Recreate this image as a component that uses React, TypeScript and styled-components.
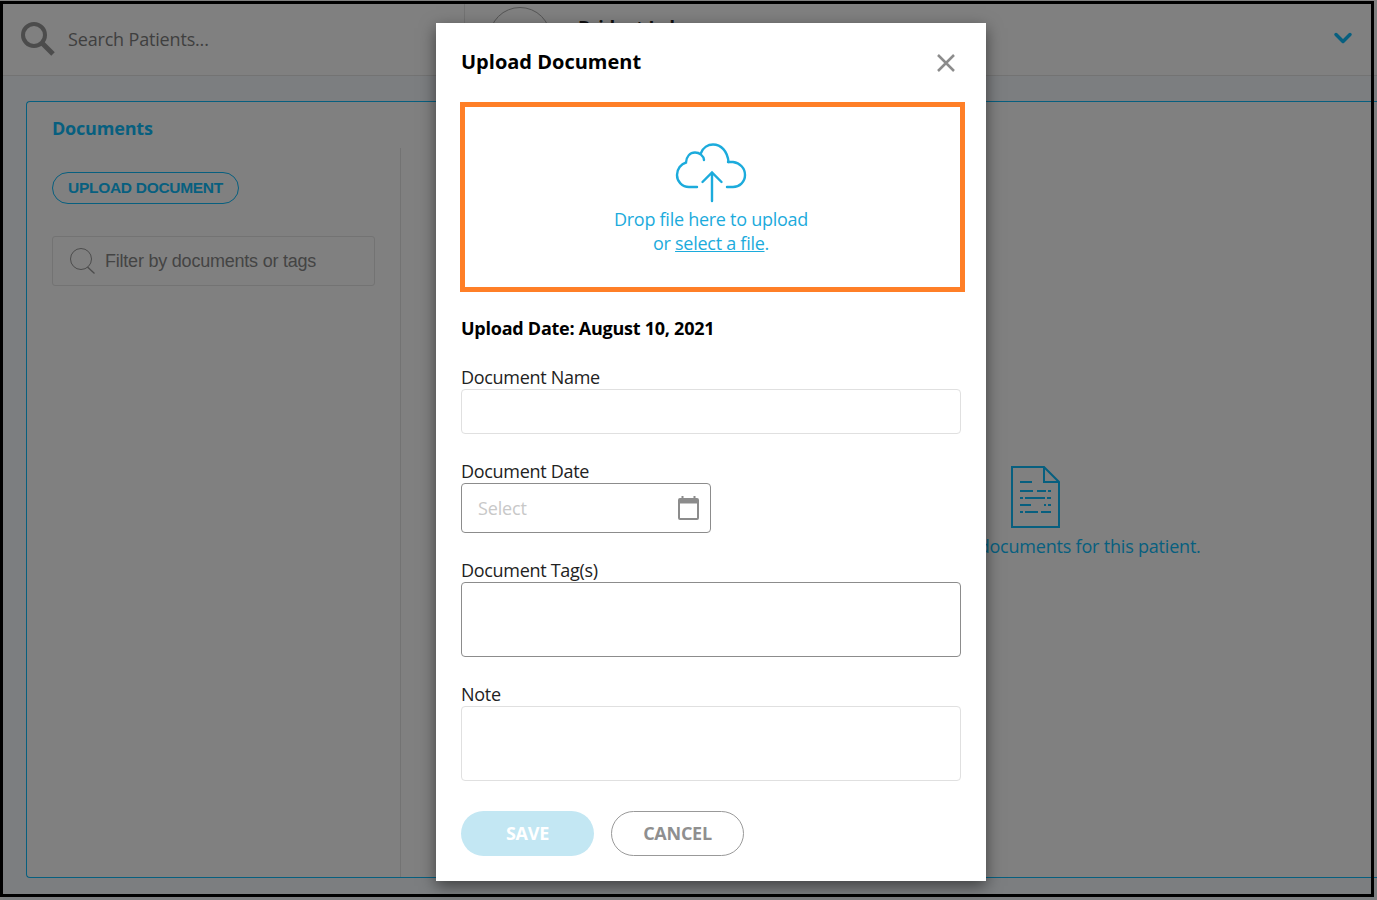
import React from "react";
import styled, { createGlobalStyle } from "styled-components";
import { ChevronDown } from "lucide-react";

const GlobalStyle = createGlobalStyle`
  html, body { margin: 0; padding: 0; }
  body { background: #808080; font-family: "Open Sans", "Noto Sans", sans-serif; overflow: hidden; }
  * { box-sizing: border-box; }
`;

const Screen = styled.div`
  position: relative;
  width: 1377px;
  height: 900px;
  overflow: hidden;
  background: #808080;
  padding: 3px 0 0 3px;
`;

// the black frame of the screenshot lies over the page
const Frame = styled.div`
  position: absolute;
  left: 0;
  top: 1px;
  width: 1374px;
  height: 896px;
  border: 3px solid #000;
  pointer-events: none;
  z-index: 3;
`;

const TopBar = styled.header`
  display: flex;
  align-items: center;
  height: 73px;
  border-bottom: 1px solid #737373;
  padding-left: 18px;
  padding-right: 20px;
`;

const SearchSlot = styled.div`
  display: flex;
  align-items: center;
  gap: 13px;
  width: 444px;
  height: 100%;
  border-right: 1px solid #737373;
`;

const SearchHint = styled.span`
  font-size: 18px;
  letter-spacing: -0.17px;
  color: #3f3f3f;
`;

const PatientSlot = styled.div`
  display: flex;
  flex: 1;
  align-items: flex-start;
  gap: 27px;
  height: 100%;
  padding: 4px 0 0 24px;
`;

const Avatar = styled.div`
  width: 62px;
  height: 62px;
  border-radius: 50%;
  border: 1px solid #555;
`;

const PatientName = styled.span`
  margin-top: 7px;
  font-size: 18px;
  font-weight: 700;
  line-height: 26px;
  color: #111;
`;

const Chevron = styled(ChevronDown)`
  align-self: center;
  margin-left: auto;
  margin-top: -6px;
  color: #075f7f;
`;

const Body = styled.main`
  height: 824px;
  padding: 25px 0 0 23px;
  background: #7c7e80;
`;

const Card = styled.section`
  display: flex;
  height: 777px;
  background: #808080;
  border: 1px solid #075f7f;
  border-right: 0;
  border-radius: 4px 0 0 4px;
`;

const Sidebar = styled.aside`
  width: 373px;
  padding: 14px 0 0 25px;
`;

const CardTitle = styled.h2`
  margin: 0 0 31px 0;
  font-size: 18px;
  font-weight: 700;
  line-height: 25px;
  letter-spacing: -0.2px;
  color: #075f7f;
`;

const OutlinePill = styled.button`
  display: block;
  width: 187px;
  height: 32px;
  padding: 0;
  border: 1px solid #075f7f;
  border-radius: 16px;
  background: transparent;
  font-family: "Liberation Sans", Arial, sans-serif;
  font-size: 15.5px;
  font-weight: 700;
  letter-spacing: -0.3px;
  color: #075f7f;
`;

const FilterBox = styled.div`
  display: flex;
  align-items: center;
  gap: 10px;
  width: 323px;
  height: 50px;
  margin-top: 32px;
  padding-left: 17px;
  border: 1px solid #737373;
  border-radius: 3px;
  font-family: "Liberation Sans", Arial, sans-serif;
  font-size: 18px;
  letter-spacing: -0.22px;
  color: #444;
`;

const Divider = styled.div`
  width: 1px;
  margin-top: 46px;
  background: #737373;
`;

const EmptyState = styled.div`
  flex: 1;
  display: flex;
  flex-direction: column;
  align-items: center;
  padding: 364px 0 0 292px;
  color: #075f7f;
`;

const EmptyText = styled.p`
  margin: 5px 0 0 0;
  font-size: 18px;
  line-height: 26px;
  letter-spacing: -0.2px;
  white-space: nowrap;
`;

const Modal = styled.div`
  position: absolute;
  left: 436px;
  top: 23px;
  z-index: 2;
  width: 550px;
  height: 858px;
  padding: 23px 25px 0 25px;
  background: #fff;
  box-shadow: 0 5px 15px rgba(0, 0, 0, 0.5);
`;

const ModalHead = styled.div`
  display: flex;
  align-items: center;
  justify-content: space-between;
  height: 30px;
  padding-right: 6px;
`;

const ModalTitle = styled.h3`
  margin: 0;
  font-size: 20px;
  font-weight: 700;
  color: #000;
`;

const CloseIcon = styled.svg`
  margin-top: 4px;
  color: #8c8c8c;
`;

const DropZone = styled.div`
  display: flex;
  flex-direction: column;
  align-items: center;
  width: 505px;
  height: 190px;
  margin: 26px 0 0 -1px;
  padding: 36px 3px 0 0;
  border: 5px solid #ff7f27;
  color: #1cabdc;
  font-size: 18px;
  line-height: 24px;
  letter-spacing: -0.27px;
  text-align: center;
`;

const DropText = styled.div`
  margin-top: 4px;
`;

const FileLink = styled.a`
  color: #1cabdc;
  text-decoration: underline;
`;

const UploadDate = styled.p`
  margin: 24px 0 0 0;
  font-size: 18px;
  font-weight: 700;
  line-height: 25px;
  letter-spacing: -0.25px;
  color: #000;
`;

const Field = styled.div<{ $top: number }>`
  margin-top: ${(p) => p.$top}px;
`;

const Label = styled.label`
  display: block;
  height: 23px;
  font-size: 18px;
  line-height: 22px;
  letter-spacing: -0.3px;
  color: #222;
`;

const TextBox = styled.div<{ $height: number; $dark?: boolean }>`
  width: 500px;
  height: ${(p) => p.$height}px;
  border: 1px solid ${(p) => (p.$dark ? "#8c8c8c" : "#e0e0e0")};
  border-radius: 4px;
  background: #fff;
`;

const DateBox = styled.div`
  display: flex;
  align-items: center;
  justify-content: space-between;
  width: 250px;
  height: 50px;
  padding: 0 11px 0 16px;
  border: 1px solid #8c8c8c;
  border-radius: 4px;
  font-size: 18px;
  letter-spacing: -0.15px;
  color: #c8c8c8;
`;

const CalendarIcon = styled.svg`
  color: #8c8c8c;
`;

const Actions = styled.div`
  display: flex;
  gap: 17px;
  margin-top: 30px;
`;

const ActionButton = styled.button<{ $filled?: boolean }>`
  width: 133px;
  height: 45px;
  padding: 0 0 2px 0;
  border: ${(p) => (p.$filled ? "0" : "1px solid #999")};
  border-radius: 23px;
  background: ${(p) => (p.$filled ? "#c3e7f3" : "#fff")};
  font-family: "Open Sans", sans-serif;
  font-size: 18px;
  font-weight: 700;
  letter-spacing: -0.25px;
  color: ${(p) => (p.$filled ? "#fff" : "#8f8f8f")};
`;

const HeavySearch = () => (
  <svg width="34" height="34" viewBox="0 0 34 34" fill="none" stroke="#4c4c4c">
    <circle cx="13" cy="13" r="11" strokeWidth="4" />
    <path d="M21 21L32 32" strokeWidth="5" />
  </svg>
);

const ThinSearch = () => (
  <svg width="25" height="26" viewBox="0 0 25 26" fill="none" stroke="#4c4c4c" strokeWidth="1">
    <circle cx="11" cy="11" r="10.500" />
    <path d="M17.500 19L24.500 25.500" strokeWidth="1.300" />
  </svg>
);

const CloudUpload = () => (
  <svg width="72" height="60" viewBox="0 0 72 60" fill="none" stroke="currentColor" strokeWidth="2.400" strokeLinecap="round">
    <path d="M22 44H14C7 44 2 38.500 2 32C2 26 6 21 11 19.500C11.500 13.500 15 9.500 20 9.500C24.500 9.500 28.500 12.500 29 17" />
    <path d="M26 10C28 4.500 33 1.500 38 1.500C46 1.500 52.500 8 53.500 19" />
    <path d="M53 19H58C65 20 70 25 70 32C70 39 64.500 44 58 44H52" />
    <path d="M37 58V30M27.500 39L37 29.500L46.500 39" />
  </svg>
);

const FileLines = () => (
  <svg width="50" height="62" viewBox="0 0 50 62" fill="none" stroke="currentColor" strokeWidth="1.800">
    <path d="M2 1H34L49 16V61H2Z" strokeWidth="2" />
    <path d="M34 1V16H49" strokeWidth="2" />
    <path d="M10 16H22M10 25H23M27 25H36M38 25H41M10 32H13M15 32H35M37 32H41M10 39H21M34 39H36M38 39H41M10 46H13M15 46H28M31 46H41" />
  </svg>
);

export default function App() {
  return (
    <Screen>
      <GlobalStyle />
      <TopBar>
        <SearchSlot>
          <HeavySearch />
          <SearchHint>Search Patients...</SearchHint>
        </SearchSlot>
        <PatientSlot>
          <Avatar />
          <PatientName>Bridget Lake</PatientName>
          <Chevron size={28} strokeWidth={3} />
        </PatientSlot>
      </TopBar>
      <Body>
        <Card>
          <Sidebar>
            <CardTitle>Documents</CardTitle>
            <OutlinePill>UPLOAD DOCUMENT</OutlinePill>
            <FilterBox>
              <ThinSearch />
              Filter by documents or tags
            </FilterBox>
          </Sidebar>
          <Divider />
          <EmptyState>
            <FileLines />
            <EmptyText>There are no documents for this patient.</EmptyText>
          </EmptyState>
        </Card>
      </Body>
      <Frame />
      <Modal>
        <ModalHead>
          <ModalTitle>Upload Document</ModalTitle>
          <CloseIcon width="18" height="18" viewBox="0 0 18 18" fill="none" stroke="currentColor" strokeWidth="2.500">
            <path d="M1 1L17 17M17 1L1 17" />
          </CloseIcon>
        </ModalHead>
        <DropZone>
          <CloudUpload />
          <DropText>
            Drop file here to upload
            <br />
            or <FileLink>select a file</FileLink>.
          </DropText>
        </DropZone>
        <UploadDate>Upload Date: August 10, 2021</UploadDate>
        <Field $top={25}>
          <Label>Document Name</Label>
          <TextBox $height={45} />
        </Field>
        <Field $top={26}>
          <Label>Document Date</Label>
          <DateBox>
            Select
            <CalendarIcon width="21" height="24" viewBox="0 0 21 24" fill="none" stroke="currentColor">
              <path d="M4.500 0V4M16.500 0V4" strokeWidth="2" />
              <rect x="1" y="3" width="19" height="20" rx="1" strokeWidth="2" />
              <path d="M1 5.500H20" strokeWidth="4" />
            </CalendarIcon>
          </DateBox>
        </Field>
        <Field $top={26}>
          <Label>Document Tag(s)</Label>
          <TextBox $height={75} $dark />
        </Field>
        <Field $top={26}>
          <Label>Note</Label>
          <TextBox $height={75} />
        </Field>
        <Actions>
          <ActionButton $filled>SAVE</ActionButton>
          <ActionButton>CANCEL</ActionButton>
        </Actions>
      </Modal>
    </Screen>
  );
}
